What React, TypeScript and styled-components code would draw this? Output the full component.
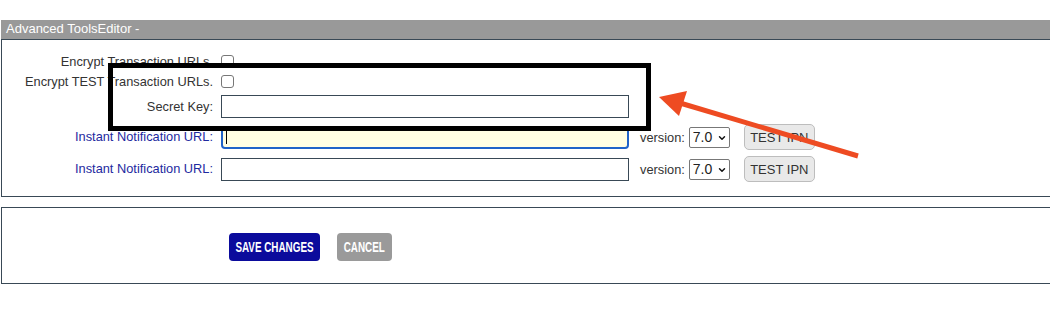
import React, { FC } from 'react';
import styled, { createGlobalStyle } from 'styled-components';
import { ChevronDown } from 'lucide-react';

const GlobalStyle = createGlobalStyle`
  html, body {
    margin: 0;
    padding: 0;
    background: #fff;
    overflow: hidden;
  }
  body {
    font-family: 'Liberation Sans', Arial, sans-serif;
    font-size: 13px;
    color: #333;
  }
`;

const Page = styled.div`
  position: relative;
  width: 1050px;
  height: 331px;
  padding-top: 20px;
  box-sizing: border-box;
  overflow: hidden;
`;

const Panel = styled.div`
  width: 1070px;
  margin-left: 1px;
  border: 1px solid #394956;
  box-sizing: border-box;
`;

const PanelHeader = styled.div`
  height: 19px;
  margin-left: 1px;
  width: 1070px;
  background: #999;
  color: #fff;
  font-size: 13px;
  line-height: 18px;
  padding-left: 5px;
  box-sizing: border-box;
`;

const FormGrid = styled.div`
  display: grid;
  grid-template-columns: 211px 1fr;
  column-gap: 8px;
  align-items: center;
  padding: 12px 0 11px;
`;

const Label = styled.label<{ $link?: boolean }>`
  text-align: right;
  white-space: nowrap;
  color: ${(p) => (p.$link ? '#1e2aa0' : '#333')};
  font-size: 12.8px;
  line-height: 16px;
`;

const Field = styled.div<{ $h: number }>`
  display: flex;
  align-items: center;
  height: ${(p) => p.$h}px;
`;

const Check = styled.input.attrs({ type: 'checkbox' })`
  appearance: none;
  width: 13px;
  height: 13px;
  margin: 0;
  border: 1px solid #777;
  border-radius: 3px;
  background: #fff;
`;

const TextInput = styled.input<{ $focus?: boolean }>`
  width: 408px;
  height: 23px;
  margin: 0;
  box-sizing: border-box;
  border: ${(p) => (p.$focus ? '2px solid #1f63c9' : '1px solid #394956')};
  border-radius: ${(p) => (p.$focus ? '4px' : '0')};
  background: ${(p) => (p.$focus ? '#fffee3' : '#fff')};
  outline: none;
  font-family: inherit;
  font-size: 13px;
  padding: 0 3px;
`;

const Caret = styled.span`
  position: absolute;
  left: 5px;
  top: 4px;
  width: 1px;
  height: 14px;
  background: #000;
`;

const InputWrap = styled.div`
  position: relative;
  display: flex;
`;

const Version = styled.span`
  margin-left: 11px;
  margin-right: 4px;
  color: #333;
  font-size: 12.8px;
`;

const SelectWrap = styled.div`
  position: relative;
  display: flex;
  svg {
    position: absolute;
    right: 3px;
    top: 6px;
    pointer-events: none;
  }
`;

const Select = styled.select`
  appearance: none;
  width: 41px;
  height: 21px;
  margin: 0;
  padding: 0 0 0 3px;
  border: 1px solid #777;
  border-radius: 2px;
  background: #fff;
  font-family: inherit;
  font-size: 14px;
  color: #222;
`;

const TestButton = styled.button`
  margin-left: 14px;
  width: 71px;
  height: 26px;
  border: 1px solid #bdbdbd;
  border-radius: 5px;
  background: #e9e9e9;
  color: #333;
  font-family: inherit;
  font-size: 13px;
  padding: 0;
`;

const ActionsPanel = styled(Panel)`
  margin-top: 10px;
  height: 77px;
  display: flex;
  align-items: center;
  gap: 17px;
  padding-left: 227px;
  padding-top: 2px;
`;

const ActionButton = styled.button<{ $w: number; $primary?: boolean }>`
  display: flex;
  align-items: center;
  justify-content: center;
  width: ${(p) => p.$w}px;
  height: 28px;
  padding: 0;
  border: none;
  border-radius: 4px;
  background: ${(p) => (p.$primary ? '#0b0b9c' : '#9a9a9a')};
  color: #fff;
  font-family: 'Liberation Sans', Arial, sans-serif;
  font-weight: bold;
  font-size: 14.5px;
  text-transform: uppercase;
  white-space: nowrap;

  span {
    flex: none;
    display: inline-block;
    transform: scaleX(0.68);
    transform-origin: center;
  }
`;

const Highlight = styled.div`
  position: absolute;
  left: 108px;
  top: 63px;
  width: 543px;
  height: 68px;
  border: 5px solid #000;
  box-sizing: border-box;
  pointer-events: none;
`;

const Arrow = styled.svg`
  position: absolute;
  left: 0;
  top: 0;
  pointer-events: none;
`;

const IpnRow: FC<{ focus?: boolean }> = ({ focus }) => (
  <>
    <Label $link>Instant Notification URL:</Label>
    <Field $h={32}>
      <InputWrap>
        <TextInput $focus={focus} />
        {focus && <Caret />}
      </InputWrap>
      <Version>version:</Version>
      <SelectWrap>
        <Select defaultValue="7.0">
          <option>7.0</option>
        </Select>
        <ChevronDown size={10} strokeWidth={3.5} color="#111" />
      </SelectWrap>
      <TestButton>TEST IPN</TestButton>
    </Field>
  </>
);

const App: FC = () => (
  <>
    <GlobalStyle />
    <Page>
      <PanelHeader>Advanced ToolsEditor -</PanelHeader>
      <Panel>
        <FormGrid>
          <Label>Encrypt Transaction URLs.</Label>
          <Field $h={19}>
            <Check />
          </Field>
          <Label>Encrypt TEST Transaction URLs.</Label>
          <Field $h={21}>
            <Check />
          </Field>
          <Label>Secret Key:</Label>
          <Field $h={29}>
            <TextInput />
          </Field>
          <IpnRow focus />
          <IpnRow />
        </FormGrid>
      </Panel>
      <ActionsPanel>
        <ActionButton $w={91} $primary>
          <span>Save Changes</span>
        </ActionButton>
        <ActionButton $w={55}>
          <span>Cancel</span>
        </ActionButton>
      </ActionsPanel>
      <Highlight />
      <Arrow width="1050" height="331" viewBox="0 0 1050 331">
        <line x1="858" y1="156" x2="680" y2="103" stroke="#ee4b22" strokeWidth="5" />
        <polygon points="659,97 687,91 679,116" fill="#ee4b22" />
      </Arrow>
    </Page>
  </>
);

export default App;
